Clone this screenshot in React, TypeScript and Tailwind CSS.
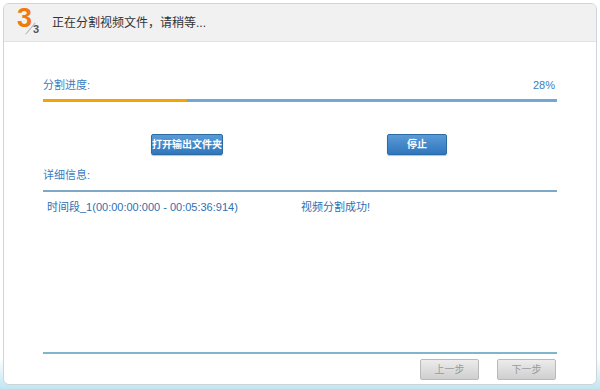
const FONT = "font-['Liberation_Sans','Noto_Sans_CJK_SC',sans-serif]";

function BlueButton({ label, className }: { label: string; className?: string }) {
  return (
    <button
      className={`flex h-[21px] items-center justify-center rounded-[2px] border border-[#2b6aa3] bg-gradient-to-b from-[#5a9ad6] to-[#2f77bd] text-[10px] font-bold text-white shadow-[0_1px_1px_rgba(0,0,0,0.25)] ${className ?? ''}`}
    >
      {label}
    </button>
  );
}

function GrayButton({ label }: { label: string }) {
  return (
    <button className="flex h-[21px] w-[59px] items-center justify-center rounded-[2px] border border-[#b9b9b9] bg-gradient-to-b from-[#ececec] to-[#cfcfcf] text-[10px] text-[#9a9a9a]">
      {label}
    </button>
  );
}

export default function App() {
  const progress = 28;

  return (
    <div
      className={`flex h-[389px] w-[600px] flex-col bg-gradient-to-b from-white from-[92%] to-[#bfe6f2] px-[3px] pt-[3px] ${FONT}`}
    >
      <div className="flex h-[382px] flex-col overflow-hidden rounded-[6px] border border-[#cdd5d9] bg-white">
        {/* header */}
        <div className="flex h-[38px] shrink-0 items-center border-b border-[#e2e2e2] bg-[#f1f1f1] pl-[13px]">
          <div className="relative h-[30px] w-[28px]">
            <span className="absolute left-0 top-[-3px] font-['Liberation_Sans',sans-serif] text-[27px] font-bold leading-none text-[#f07a10]">
              3
            </span>
            <span className="absolute left-[13px] top-[13px] h-[15px] w-px rotate-[40deg] bg-[#b0b0b0]" />
            <span className="absolute left-[16px] top-[16px] font-['Liberation_Sans',sans-serif] text-[11px] font-bold leading-none text-[#555]">
              3
            </span>
          </div>
          <span className="ml-[7px] text-[12px] text-[#333]">正在分割视频文件，请稍等...</span>
        </div>

        {/* body */}
        <div className="flex flex-1 flex-col px-[39px]">
          <div className="mt-[35px] flex items-center justify-between text-[11px] text-[#3b7cbf]">
            <span>分割进度:</span>
            <span className="mr-[2px]">{progress}%</span>
          </div>
          <div className="mt-[5px] flex h-[3px] w-full bg-[#74a5d8]">
            <div className="h-full bg-[#f5a300]" style={{ width: `${progress}%` }} />
          </div>

          <div className="mt-[32px] flex">
            <BlueButton label="打开输出文件夹" className="ml-[108px] w-[72px]" />
            <BlueButton label="停止" className="ml-[164px] w-[60px]" />
          </div>

          <div className="mt-[12px] text-[11px] text-[#3b7cbf]">详细信息:</div>
          <div className="mt-[7px] h-[2px] w-full bg-[#7fa8c6]" />
          <div className="mt-[7px] flex text-[11px] text-[#2f6fb0]">
            <span className="ml-[4px] w-[254px]">时间段_1(00:00:00:000 - 00:05:36:914)</span>
            <span>视频分割成功!</span>
          </div>

          <div className="mt-auto h-[2px] w-full bg-[#7fb6cc]" />
          <div className="mb-[4px] mt-[5px] flex justify-end gap-[18px] pr-px">
            <GrayButton label="上一步" />
            <GrayButton label="下一步" />
          </div>
        </div>
      </div>
    </div>
  );
}
